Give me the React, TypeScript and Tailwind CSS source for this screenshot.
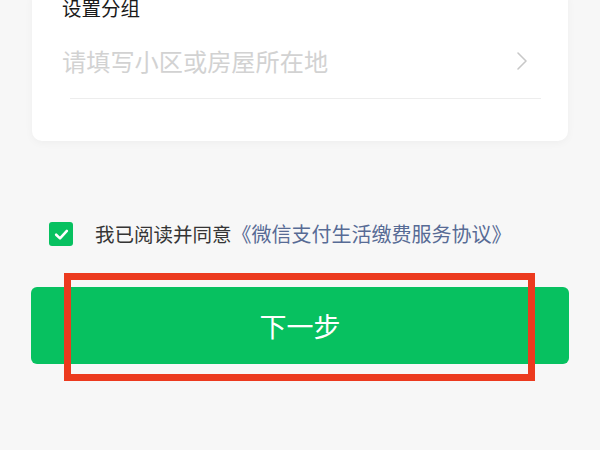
const FONT = "font-['Noto_Sans_CJK_SC','Noto_Sans',sans-serif]";

function Chevron() {
  return (
    <svg width="12" height="20" viewBox="0 0 12 20" fill="none">
      <path d="M2 2 L10 10 L2 18" stroke="#c8c8c8" strokeWidth="1.6" strokeLinecap="round" strokeLinejoin="round" />
    </svg>
  );
}

function CheckBox() {
  return (
    <div className="w-[24px] h-[24px] rounded-[3px] bg-[#07c160] flex items-center justify-center shrink-0">
      <svg width="15" height="15" viewBox="0 0 14 14" fill="none">
        <path d="M2 7.2 L5.6 10.6 L12 3.6" stroke="#ffffff" strokeWidth="2.4" strokeLinecap="round" strokeLinejoin="round" />
      </svg>
    </div>
  );
}

export default function App() {
  return (
    <div className={`relative w-[600px] h-[450px] overflow-hidden bg-[#f7f7f7] ${FONT}`}>
      <div className="mx-[32px] -mt-[6px] bg-white rounded-b-[10px] px-[30px] pb-[42px] shadow-[0_2px_8px_rgba(0,0,0,0.04)]">
        <div className="text-[19.5px] leading-[28px] text-[#1a1a1a]">设置分组</div>
        <div className="mt-[23px] h-[32px] flex items-center justify-between">
          <span className="text-[24.2px] leading-[32px] text-[#d2d2d2]">请填写小区或房屋所在地</span>
          <span className="mr-[10px] flex items-center">
            <Chevron />
          </span>
        </div>
        <div className="mt-[21px] ml-[8px] -mr-[3px] h-px bg-[#ededed]" />
      </div>

      <div className="mt-[81px] ml-[49px] flex items-center gap-[22px]">
        <CheckBox />
        <p className="text-[19.5px] leading-[24px] text-[#353535] whitespace-nowrap">
          我已阅读并同意<span className="text-[20px] text-[#576b95]">《微信支付生活缴费服务协议》</span>
        </p>
      </div>

      <button className="mt-[41px] mx-[31px] w-[538px] h-[77px] rounded-[6px] bg-[#07c160] flex items-center justify-center">
        <span className="text-[27px] leading-[32px] text-white">下一步</span>
      </button>

      <div className="absolute left-[64px] top-[273px] w-[471px] h-[108px] border-[7px] border-[#ec3a1e] pointer-events-none" />
    </div>
  );
}
